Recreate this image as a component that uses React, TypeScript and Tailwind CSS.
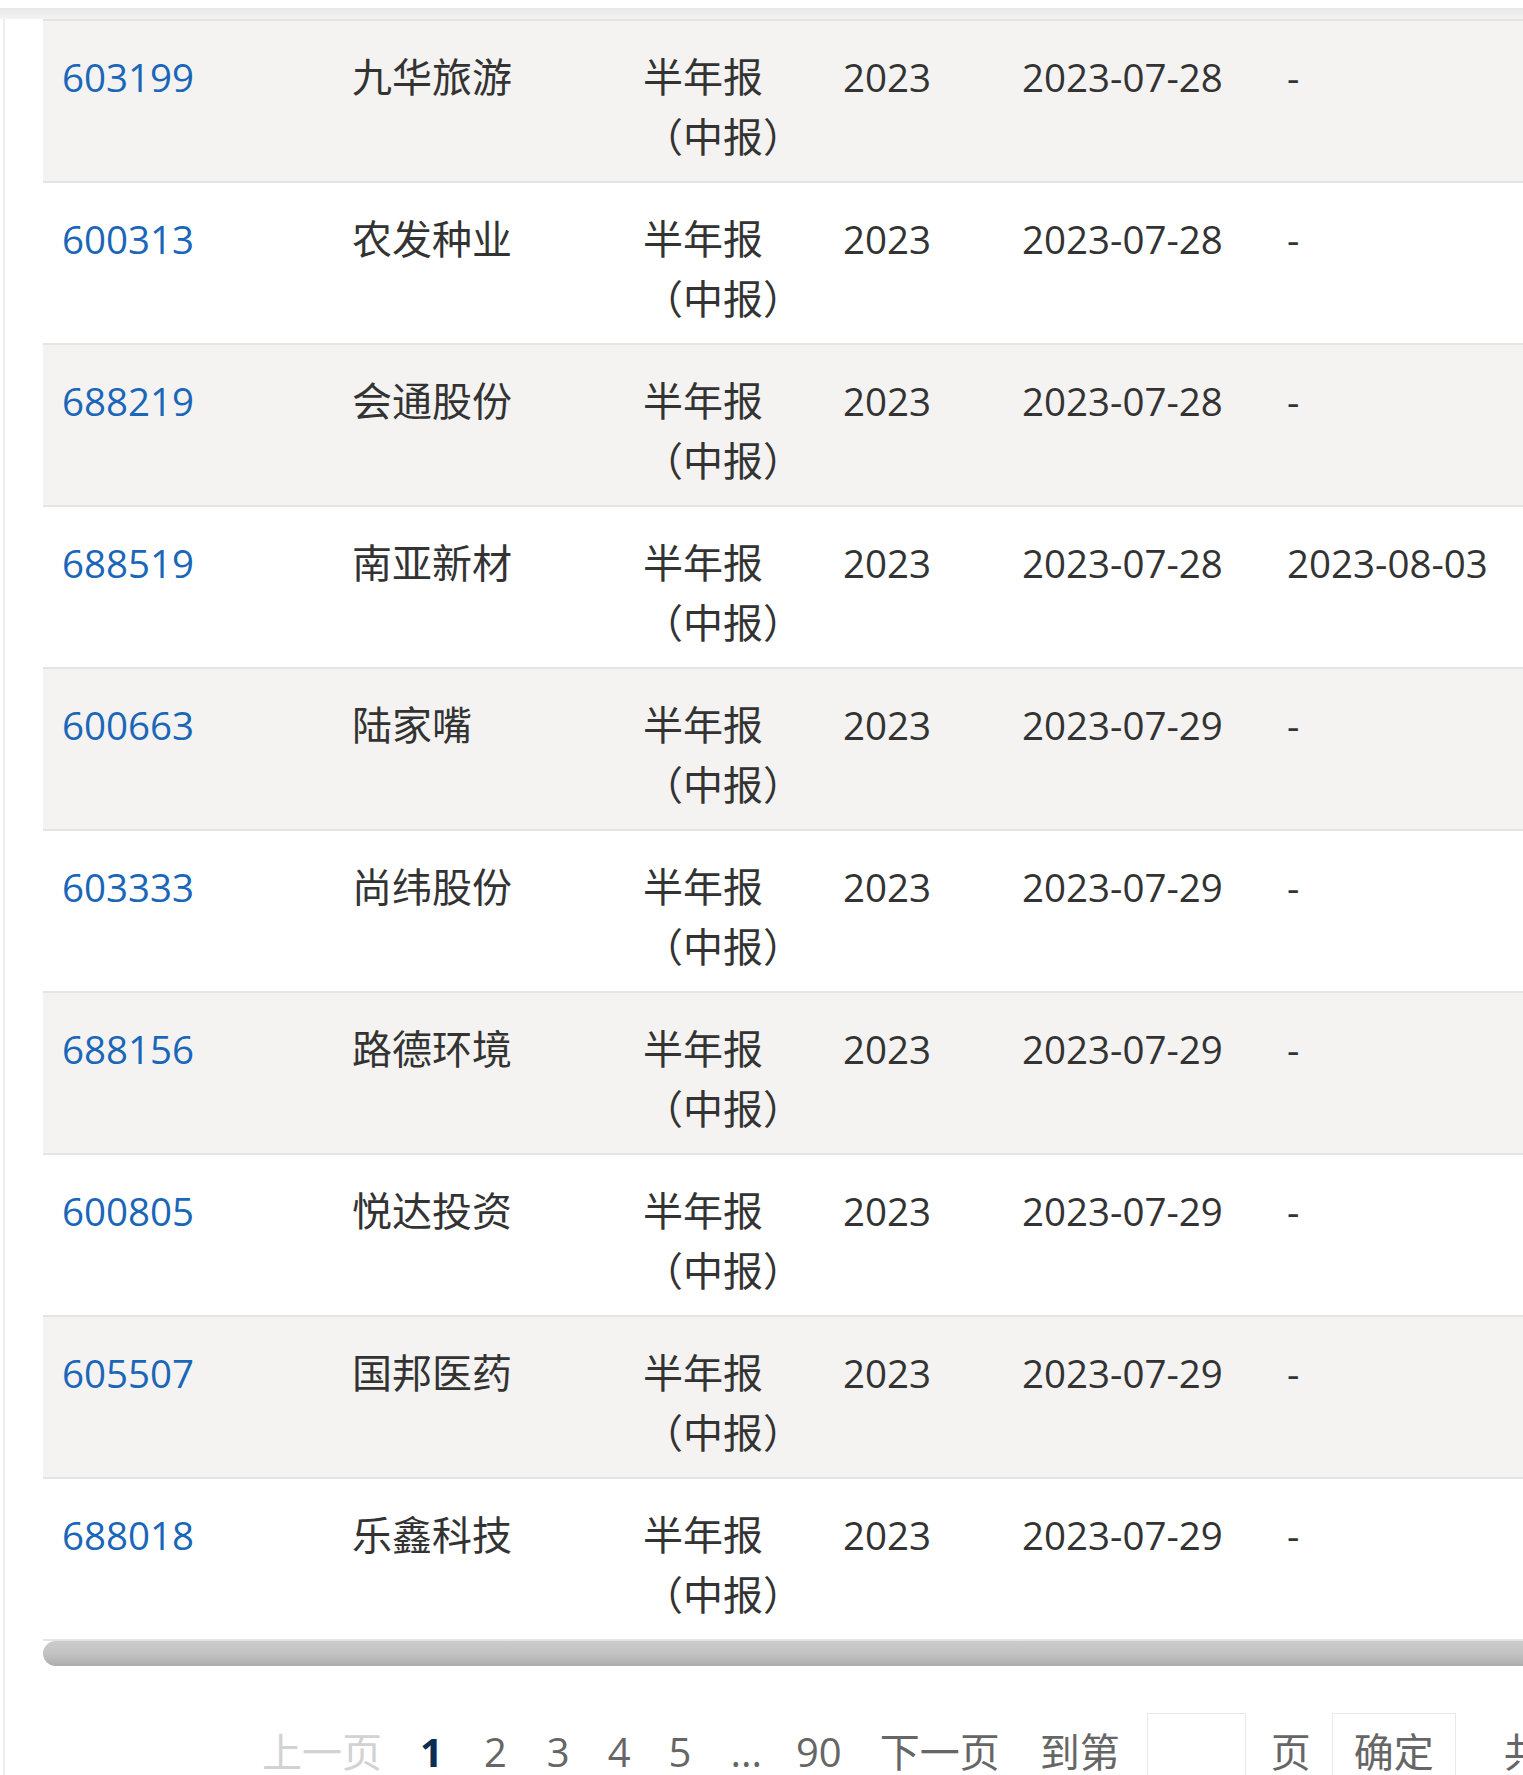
import React from "react";

type Row = {
  code: string;
  name: string;
  year: string;
  date: string;
  actual: string;
};

const rows: Row[] = [
  { code: "603199", name: "九华旅游", year: "2023", date: "2023-07-28", actual: "-" },
  { code: "600313", name: "农发种业", year: "2023", date: "2023-07-28", actual: "-" },
  { code: "688219", name: "会通股份", year: "2023", date: "2023-07-28", actual: "-" },
  { code: "688519", name: "南亚新材", year: "2023", date: "2023-07-28", actual: "2023-08-03" },
  { code: "600663", name: "陆家嘴", year: "2023", date: "2023-07-29", actual: "-" },
  { code: "603333", name: "尚纬股份", year: "2023", date: "2023-07-29", actual: "-" },
  { code: "688156", name: "路德环境", year: "2023", date: "2023-07-29", actual: "-" },
  { code: "600805", name: "悦达投资", year: "2023", date: "2023-07-29", actual: "-" },
  { code: "605507", name: "国邦医药", year: "2023", date: "2023-07-29", actual: "-" },
  { code: "688018", name: "乐鑫科技", year: "2023", date: "2023-07-29", actual: "-" },
];

function TableRow({ row, odd }: { row: Row; odd: boolean }) {
  return (
    <div
      className={
        "flex h-[162px] shrink-0 border-t-2 border-[#e4e4e4] text-[40px] leading-[60px] text-[#333] " +
        (odd ? "bg-[#f4f3f1]" : "bg-white")
      }
    >
      <div className="w-[290px] shrink-0 pl-[19px] pt-[26px] text-[38.5px]">
        <a href="#" className="text-[#1a66b8]">
          {row.code}
        </a>
      </div>
      <div className="w-[291px] shrink-0 pl-[19px] pt-[26px]">{row.name}</div>
      <div className="w-[200px] shrink-0 pl-[19px] pr-[4px] pt-[26px]">半年报（中报）</div>
      <div className="w-[179px] shrink-0 pl-[19px] pt-[26px] text-[38.5px]">{row.year}</div>
      <div className="w-[265px] shrink-0 pl-[19px] pt-[26px] text-[38.5px]">{row.date}</div>
      <div className="w-[300px] shrink-0 pl-[19px] pt-[26px] text-[38.5px] whitespace-nowrap">{row.actual}</div>
    </div>
  );
}

function Pager() {
  const num = "shrink-0 pt-px leading-[76px] text-[#666]";
  return (
    <div className="mt-[47px] flex items-start whitespace-nowrap pl-[219px] text-[40px]">
      <span className="shrink-0 pt-px leading-[76px] text-[#d2d2d2]">上一页</span>
      <span className="ml-[38px] shrink-0 pt-px font-bold leading-[76px] text-[#0b2d52]">1</span>
      <a href="#" className={"ml-[41px] " + num}>2</a>
      <a href="#" className={"ml-[40px] " + num}>3</a>
      <a href="#" className={"ml-[38px] " + num}>4</a>
      <a href="#" className={"ml-[38px] " + num}>5</a>
      <span className={"ml-[39px] " + num}>...</span>
      <a href="#" className={"ml-[34px] " + num}>90</a>
      <a href="#" className={"ml-[38px] " + num}>下一页</a>
      <span className={"ml-[40px] " + num}>到第</span>
      <input
        type="text"
        className="ml-[27px] h-[78px] w-[99px] shrink-0 border border-[#e8e8e8] bg-white outline-none"
      />
      <span className={"ml-[25px] " + num}>页</span>
      <button className="ml-[21px] h-[78px] w-[124px] shrink-0 border border-[#e8e8e8] bg-white leading-[76px] text-[#666]">
        确定
      </button>
      <span className={"ml-[48px] " + num}>共 90 页</span>
    </div>
  );
}

export default function App() {
  return (
    <div className="h-[1775px] w-[1523px] overflow-hidden bg-white font-['Open_Sans','Noto_Sans_CJK_SC',sans-serif]">
      <div className="h-[8px] bg-white" />
      <div className="h-[11px] bg-linear-to-b from-[#e8e8e8] to-[#f3f3f3]" />
      <div className="flex">
        <div className="w-[43px] shrink-0">
          <div className="ml-[3px] h-[1756px] w-[2px] bg-[#ededed]" />
        </div>
        <div className="min-w-0 flex-1 overflow-hidden">
          <div className="flex w-[1600px] flex-col">
            {rows.map((r, i) => (
              <TableRow key={r.code} row={r} odd={i % 2 === 0} />
            ))}
            <div className="border-t-2 border-[#e4e4e4]">
              <div className="h-[25px] rounded-l-full bg-linear-to-b from-[#cbcbcb] via-[#c3c3c3] to-[#adadad]" />
            </div>
          </div>
          <Pager />
        </div>
      </div>
    </div>
  );
}
